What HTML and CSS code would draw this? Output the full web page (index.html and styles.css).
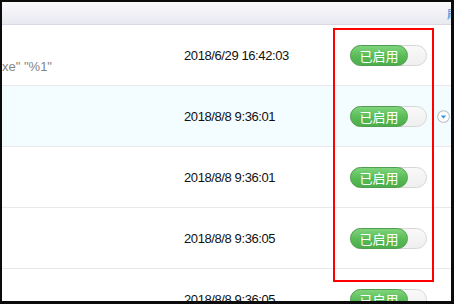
FILE: index.html
```html
<!DOCTYPE html>
<html>
<head>
<meta charset="utf-8">
<link rel="stylesheet" href="styles.css">
</head>
<body>
<div class="frame">
  <div class="header"><span class="refresh">刷新</span></div>
  <div class="row">
    <div class="cmd"><span class="cmd-line">xe" "%1"</span></div>
    <div class="time">2018/6/29 16:42:03</div>
    <div class="state"><span class="toggle"><span class="on">已启用</span></span></div>
    <div class="more"></div>
  </div>
  <div class="row hover">
    <div class="cmd"></div>
    <div class="time">2018/8/8 9:36:01</div>
    <div class="state"><span class="toggle"><span class="on">已启用</span></span></div>
    <div class="more">
      <svg width="13" height="13" viewBox="0 0 14 14"><circle cx="7" cy="7" r="6.3" fill="#fff" stroke="#b9bec3" stroke-width="1.1"/><path d="M4 6 L10 6 L7 9.2 Z" fill="#2f95e0"/></svg>
    </div>
  </div>
  <div class="row">
    <div class="cmd"></div>
    <div class="time">2018/8/8 9:36:01</div>
    <div class="state"><span class="toggle"><span class="on">已启用</span></span></div>
    <div class="more"></div>
  </div>
  <div class="row">
    <div class="cmd"></div>
    <div class="time">2018/8/8 9:36:05</div>
    <div class="state"><span class="toggle"><span class="on">已启用</span></span></div>
    <div class="more"></div>
  </div>
  <div class="row">
    <div class="cmd"></div>
    <div class="time">2018/8/8 9:36:05</div>
    <div class="state"><span class="toggle"><span class="on">已启用</span></span></div>
    <div class="more"></div>
  </div>
  <div class="mark"></div>
</div>
</body>
</html>
```
FILE: styles.css
```css
html, body {
  margin: 0;
  padding: 0;
  background: #0b0b0b;
}
body {
  width: 454px;
  height: 304px;
  overflow: hidden;
  font-family: "Liberation Sans", Arial, "Noto Sans CJK SC", sans-serif;
  font-size: 12px;
  color: #222;
}
.frame {
  position: relative;
  margin: 2px 3px 3px 2px;
  width: 449px;
  height: 299px;
  background: #fff;
  overflow: hidden;
}
.header {
  height: 22px;
  border-bottom: 1px solid #d9d9e3;
  background: linear-gradient(#f9f9fc, #e9e9f1);
  display: flex;
  justify-content: flex-end;
  align-items: center;
}
.refresh {
  margin-right: -20px;
  color: #3b8fd8;
  font-family: "Noto Sans CJK SC", sans-serif;
  font-size: 12px;
}
.row {
  height: 60px;
  border-bottom: 1px solid #e9e9e9;
  display: flex;
  align-items: center;
}
.row.hover {
  background: #f3fcff;
}
.cmd, .time, .state, .more {
  flex: none;
}
.cmd {
  width: 182px;
  height: 100%;
  position: relative;
}
.cmd-line {
  position: absolute;
  left: 0;
  top: 34px;
  color: #858585;
  font-size: 13px;
}
.time {
  width: 166px;
  color: #111;
  font-size: 13px;
  letter-spacing: -0.4px;
}
.state {
  width: 87px;
  display: flex;
  align-items: center;
}
.toggle {
  width: 75px;
  height: 19px;
  border: 1px solid #d6d6d6;
  border-radius: 11px;
  background: linear-gradient(#f9f9f9, #efefef);
  position: relative;
  display: block;
}
.on {
  position: absolute;
  left: -1px;
  top: -1px;
  width: 56px;
  height: 19px;
  border: 1px solid #4f9e4f;
  border-radius: 11px;
  background: linear-gradient(#7fd47b, #58bb55 55%, #4cad4a);
  color: #fff;
  font-family: "Noto Sans CJK SC", sans-serif;
  font-size: 13px;
  line-height: 19px;
  text-align: center;
}
.more {
  width: 14px;
  display: flex;
  align-items: center;
}
.more svg {
  display: block;
}
.mark {
  position: absolute;
  left: 331px;
  top: 26px;
  width: 97px;
  height: 250px;
  border: 2px solid #f00;
}
```
